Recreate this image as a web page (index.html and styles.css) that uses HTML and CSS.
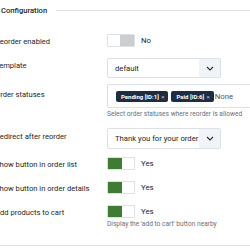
FILE: index.html
```html
<!DOCTYPE html>
<html>
<head>
<meta charset="utf-8">
<link rel="stylesheet" href="styles.css">
</head>
<body>
<div class="page">
  <div class="legend">
    <span class="legend-text">Configuration</span>
    <span class="legend-line"></span>
  </div>
  <div class="form">
    <div class="row r-toggle first">
      <div class="label">Reorder enabled</div>
      <div class="control">
        <div class="switch-line">
          <span class="switch off"><span class="knob"></span></span>
          <span class="state">No</span>
        </div>
      </div>
    </div>
    <div class="row r-select">
      <div class="label">Template</div>
      <div class="control">
        <div class="select"><span class="value">default</span><span class="arrow"><svg width="8" height="5" viewBox="0 0 8 5"><path d="M1 1l3 3 3-3" fill="none" stroke="#333" stroke-width="1.2"/></svg></span></div>
      </div>
    </div>
    <div class="row r-multi">
      <div class="label">Order statuses</div>
      <div class="control">
        <div class="multi">
          <span class="tag">Pending [ID:1] <span class="x">×</span></span>
          <span class="tag">Paid [ID:6] <span class="x">×</span></span>
          <span class="none">None</span>
        </div>
        <div class="help">Select order statuses where reorder is allowed</div>
      </div>
    </div>
    <div class="row r-select2">
      <div class="label">Redirect after reorder</div>
      <div class="control">
        <div class="select"><span class="value">Thank you for your order</span><span class="arrow"><svg width="8" height="5" viewBox="0 0 8 5"><path d="M1 1l3 3 3-3" fill="none" stroke="#333" stroke-width="1.2"/></svg></span></div>
      </div>
    </div>
    <div class="row r-toggle">
      <div class="label">Show button in order list</div>
      <div class="control">
        <div class="switch-line">
          <span class="switch on"><span class="knob"></span></span>
          <span class="state">Yes</span>
        </div>
      </div>
    </div>
    <div class="row r-toggle">
      <div class="label">Show button in order details</div>
      <div class="control">
        <div class="switch-line">
          <span class="switch on"><span class="knob"></span></span>
          <span class="state">Yes</span>
        </div>
      </div>
    </div>
    <div class="row r-toggle">
      <div class="label">Add products to cart</div>
      <div class="control">
        <div class="switch-line">
          <span class="switch on"><span class="knob"></span></span>
          <span class="state">Yes</span>
        </div>
        <div class="help">Display the 'add to cart' button nearby</div>
      </div>
    </div>
  </div>
  <div class="bottom-line"></div>
</div>
</body>
</html>
```

FILE: styles.css
```css
html, body {
  margin: 0;
  padding: 0;
  background: #fff;
  overflow: hidden;
}
body {
  font-family: Roboto, "Liberation Sans", sans-serif;
  color: #22262a;
  width: 250px;
  height: 250px;
}
.page {
  width: 260px;
  margin-left: -5px;
}
.legend {
  display: flex;
  align-items: center;
  height: 20px;
  padding-left: 6px;
}
.legend-text {
  font-size: 7.6px;
  font-weight: 500;
  color: #22262a;
}
.legend-line {
  flex: 1;
  height: 1px;
  background: #dfe3e7;
  margin-left: 9px;
}
.form {
  padding-top: 14px;
}
.row {
  display: flex;
  margin-bottom: 11px;
}
.label {
  width: 112px;
  flex: none;
  font-size: 7.6px;
  color: #22262a;
  white-space: nowrap;
}
.r-toggle .label { padding-top: 3px; }
.r-select .label { padding-top: 3px; }
.r-select2 .label { padding-top: 4px; }
.r-multi .label { padding-top: 6px; }
.r-select { margin-bottom: 6px; }
.r-multi { margin-bottom: 10px; }
.r-select2 { margin-bottom: 8px; }
.control { flex: 1; }
.switch-line {
  display: flex;
  align-items: center;
  height: 13px;
}
.switch {
  width: 26px;
  height: 11px;
  border: 1px solid #dde1e6;
  border-radius: 1px;
  display: flex;
  background: #fff;
}
.switch .knob {
  width: 14px;
  height: 11px;
  display: block;
}
.switch.off { justify-content: flex-end; }
.switch.off .knob { background: #cdcdcd; }
.switch.on .knob { background: #3f7b34; }
.state {
  font-size: 7.8px;
  margin-left: 6px;
  color: #22262a;
}
.select {
  width: 112px;
  height: 18px;
  border: 1px solid #dde1e6;
  border-radius: 2px;
  display: flex;
  align-items: center;
}
.select .value {
  flex: 1;
  font-size: 7.7px;
  padding-left: 7px;
  white-space: nowrap;
  color: #22262a;
}
.select .arrow {
  width: 21px;
  height: 18px;
  background: #f0f3f8;
  display: flex;
  align-items: center;
  justify-content: center;
}
.r-select2 .select { height: 19px; }
.r-select2 .select .arrow { height: 19px; }
.multi {
  height: 22px;
  border: 1px solid #dde1e6;
  border-right: none;
  border-radius: 2px 0 0 2px;
  display: flex;
  align-items: center;
  padding-left: 8px;
  gap: 3px;
}
.tag {
  background: #1e2d42;
  color: #fff;
  font-size: 6px;
  font-weight: 700;
  height: 11px;
  line-height: 11px;
  padding: 0 4px 0 5px;
  border-radius: 2px;
  white-space: nowrap;
}
.tag .x { font-weight: 400; opacity: 0.7; margin-left: 1px; }
.none {
  font-size: 7.8px;
  color: #555;
  margin-left: -2px;
}
.help {
  font-size: 6.6px;
  color: #6a7076;
  margin-top: 2px;
  white-space: nowrap;
}
.bottom-line {
  height: 1px;
  background: #dfe3e7;
  margin-top: 17px;
}
```
